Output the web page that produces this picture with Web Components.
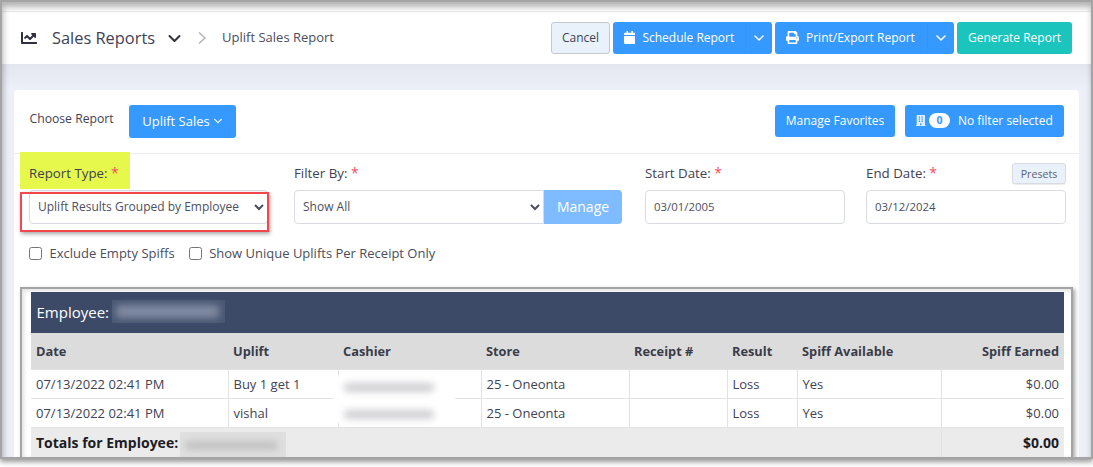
<!DOCTYPE html>
<html>
<head>
<meta charset="utf-8">
<title>Sales Reports</title>
<style>
	html, body {
		margin: 0;
		background: #fff;
		font-family: "Open Sans", sans-serif;
		color: #3f4254;
	}
	body {
		height: 467px;
		overflow: hidden;
	}
</style>
</head>
<body>
<sr-app>
	<sr-topbar></sr-topbar>
	<sr-card>
		<sr-choose-bar></sr-choose-bar>
		<sr-filters></sr-filters>
		<sr-results></sr-results>
	</sr-card>
</sr-app>

<script>
const ICONS = {
	chart: ['0 0 512 512', 'M496 384H64V80c0-8.84-7.16-16-16-16H16C7.16 64 0 71.16 0 80v336c0 17.67 14.33 32 32 32h464c8.84 0 16-7.16 16-16v-32c0-8.84-7.16-16-16-16zM464 96H345.94c-21.38 0-32.09 25.85-16.97 40.97l32.4 32.4L288 242.75l-73.37-73.37c-12.5-12.5-32.76-12.5-45.25 0l-68.69 68.69c-6.25 6.25-6.25 16.38 0 22.63l22.62 22.62c6.25 6.25 16.38 6.25 22.63 0L192 237.25l73.37 73.37c12.5 12.5 32.76 12.5 45.25 0l96-96 32.4 32.4c15.12 15.12 40.97 4.41 40.97-16.97V112c.01-8.84-7.15-16-15.99-16z'],
	calendar: ['0 0 448 512', 'M12 192h424c6.6 0 12 5.4 12 12v260c0 26.5-21.5 48-48 48H48c-26.5 0-48-21.5-48-48V204c0-6.6 5.4-12 12-12zm436-44v-36c0-26.5-21.5-48-48-48h-48V12c0-6.6-5.4-12-12-12h-40c-6.6 0-12 5.4-12 12v52H160V12c0-6.6-5.4-12-12-12h-40c-6.6 0-12 5.4-12 12v52H48C21.5 64 0 85.5 0 112v36c0 6.6 5.4 12 12 12h424c6.6 0 12-5.4 12-12z'],
	print: ['0 0 512 512', 'M448 192V77.25c0-8.49-3.37-16.62-9.37-22.63L393.37 9.37c-6-6-14.14-9.37-22.63-9.37H96C78.33 0 64 14.33 64 32v160c-35.35 0-64 28.65-64 64v112c0 8.84 7.16 16 16 16h48v96c0 17.67 14.33 32 32 32h320c17.67 0 32-14.33 32-32v-96h48c8.84 0 16-7.16 16-16V256c0-35.35-28.65-64-64-64zm-64 256H128v-96h256v96zm0-224H128V64h192v48c0 8.84 7.16 16 16 16h48v96zm48 72c-13.25 0-24-10.75-24-24 0-13.26 10.75-24 24-24s24 10.74 24 24c0 13.25-10.75 24-24 24z'],
	building: ['0 0 448 512', 'M436 480h-20V24c0-13.255-10.745-24-24-24H56C42.745 0 32 10.745 32 24v456H12c-6.627 0-12 5.373-12 12v20h448v-20c0-6.627-5.373-12-12-12zM128 76c0-6.627 5.373-12 12-12h40c6.627 0 12 5.373 12 12v40c0 6.627-5.373 12-12 12h-40c-6.627 0-12-5.373-12-12V76zm0 96c0-6.627 5.373-12 12-12h40c6.627 0 12 5.373 12 12v40c0 6.627-5.373 12-12 12h-40c-6.627 0-12-5.373-12-12v-40zm52 148h-40c-6.627 0-12-5.373-12-12v-40c0-6.627 5.373-12 12-12h40c6.627 0 12 5.373 12 12v40c0 6.627-5.373 12-12 12zm76 160h-64v-84c0-6.627 5.373-12 12-12h40c6.627 0 12 5.373 12 12v84zm64-172c0 6.627-5.373 12-12 12h-40c-6.627 0-12-5.373-12-12v-40c0-6.627 5.373-12 12-12h40c6.627 0 12 5.373 12 12v40zm0-96c0 6.627-5.373 12-12 12h-40c-6.627 0-12-5.373-12-12v-40c0-6.627 5.373-12 12-12h40c6.627 0 12 5.373 12 12v40zm0-96c0 6.627-5.373 12-12 12h-40c-6.627 0-12-5.373-12-12V76c0-6.627 5.373-12 12-12h40c6.627 0 12 5.373 12 12v40z']
};

function icon(name, size) {
	const [box, d] = ICONS[name];
	const width = size * box.split(' ')[2] / 512;
	return `<svg width="${width}" height="${size}" viewBox="${box}" fill="currentColor"><path d="${d}"/></svg>`;
}

function chevron(size, width, color) {
	return `<svg width="${size}" height="${size}" viewBox="0 0 12 12" fill="none" stroke="${color}" stroke-width="${width}" stroke-linecap="round" stroke-linejoin="round"><path d="M2 4l4 4 4-4"/></svg>`;
}

class SrElement extends HTMLElement {
	constructor() {
		super();
		this.attachShadow({mode: 'open'});
	}
	connectedCallback() {
		this.render();
	}
}

class SrApp extends SrElement {
	render() {
		this.shadowRoot.innerHTML = `
			<style>
				:host {
					display: block;
					box-sizing: border-box;
					width: 1093px;
					height: 459px;
					border: 2px solid #a4a4a4;
					background: #eef0f9;
					box-shadow: 0 3px 5px rgba(0, 0, 0, 0.4);
					overflow: hidden;
					position: relative;
				}
				.glow {
					position: absolute;
					inset: 0;
					box-shadow: inset 1px 5px 6px rgba(0, 0, 0, 0.3);
					pointer-events: none;
					z-index: 5;
				}
			</style>
			<div class="glow"></div>
			<slot></slot>
		`;
	}
}

class SrTopbar extends SrElement {
	render() {
		this.shadowRoot.innerHTML = `
			<style>
				:host {
					display: flex;
					box-sizing: border-box;
					height: 88px;
					background: linear-gradient(#fff 0, #fff 62px, #e3e5ef 62px, #eef0f9 88px);
					font-family: "Open Sans", sans-serif;
				}
				#bar {
					flex: 1;
					height: 62px;
					padding: 10px 19px 0 19px;
					box-sizing: border-box;
					display: flex;
					align-items: center;
				}
				.line {
					position: absolute;
					left: 0;
					right: 0;
					top: 9px;
					height: 1px;
					background: #ececf1;
				}
				#chart {
					color: #2f3140;
					display: flex;
					margin: -1px 15px 0 0;
				}
				#title {
					font-size: 16.4px;
					color: #3f4254;
					margin-top: -2px;
				}
				#title-arrow {
					display: flex;
					margin: 1px 0 0 12px;
				}
				#crumb-arrow {
					margin: -1px 15px 0 15px;
					display: flex;
				}
				#crumb {
					font-size: 13px;
					color: #4b4d5c;
					margin-top: -2px;
				}
				#actions {
					margin-left: auto;
					display: flex;
					gap: 3px;
				}
			</style>
			<div class="line"></div>
			<div id="bar">
				<span id="chart">${icon('chart', 16)}</span>
				<span id="title">Sales Reports</span>
				<span id="title-arrow">${chevron(15, 1.6, '#2f3140')}</span>
				<span id="crumb-arrow"><svg width="10" height="14" viewBox="0 0 10 14" fill="none" stroke="#b5b5c3" stroke-width="1.6"><path d="M2 1.5L8 7l-6 5.5"/></svg></span>
				<span id="crumb">Uplift Sales Report</span>
				<div id="actions">
					<sr-button kind="light" width="59">Cancel</sr-button>
					<sr-button split width="159" icon="calendar">Schedule Report</sr-button>
					<sr-button split width="179" icon="print">Print/Export Report</sr-button>
					<sr-button kind="teal" width="115">Generate Report</sr-button>
				</div>
			</div>
		`;
	}
}

class SrButton extends SrElement {
	render() {
		const width = this.getAttribute('width');
		const iconName = this.getAttribute('icon');
		const split = this.hasAttribute('split');
		this.shadowRoot.innerHTML = `
			<style>
				:host {
					display: inline-flex;
					box-sizing: border-box;
					height: 32px;
					width: ${width}px;
					border-radius: 3px;
					background: #3699ff;
					color: #fff;
					font-family: "Open Sans", sans-serif;
					font-size: 12px;
					align-items: center;
					justify-content: center;
					white-space: nowrap;
				}
				:host([kind="teal"]) { background: #1bc5bd; }
				:host([kind="light"]) {
					background: #e9f2fb;
					color: #3f4254;
					border: 1px solid #c6c9ce;
				}
				:host([split]) { justify-content: flex-start; }
				#main {
					flex: 1;
					display: flex;
					align-items: center;
					justify-content: ${split ? 'flex-start' : 'center'};
					gap: 7.5px;
					padding-left: ${split ? '10.5px' : '0'};
					height: 100%;
					box-sizing: border-box;
					padding-bottom: 1px;
				}
				#main svg { display: block; }
				#drop {
					width: 27px;
					height: 100%;
					display: flex;
					align-items: center;
					justify-content: center;
					border-left: 1px solid #3494fa;
					box-sizing: border-box;
				}
			</style>
			<div id="main">${iconName ? icon(iconName, 13) : ''}<span><slot></slot></span></div>
			${split ? `<div id="drop">${chevron(12, 1.5, '#fff')}</div>` : ''}
		`;
	}
}

class SrCard extends SrElement {
	render() {
		this.shadowRoot.innerHTML = `
			<style>
				:host {
					display: block;
					box-sizing: border-box;
					width: 1065px;
					height: 400px;
					margin-left: 12px;
					background: #fff;
					border-radius: 4px 4px 0 0;
				}
			</style>
			<slot></slot>
		`;
	}
}

class SrChooseBar extends SrElement {
	render() {
		this.shadowRoot.innerHTML = `
			<style>
				:host {
					display: flex;
					box-sizing: border-box;
					height: 64px;
					padding: 15px 15px 0 15.5px;
					border-bottom: 1px solid #ebedf3;
					font-family: "Open Sans", sans-serif;
				}
				#label {
					font-size: 12.2px;
					color: #3f4254;
					width: 99.5px;
					line-height: 27px;
				}
				#right {
					margin-left: auto;
					display: flex;
					gap: 10px;
				}
				#report { height: 33px; font-size: 13px; }
				.inner {
					display: flex;
					align-items: center;
				}
				.count {
					background: #fff;
					color: #3699ff;
					font-weight: 700;
					font-size: 10.5px;
					width: 21px;
					height: 15px;
					line-height: 15px;
					text-align: center;
					border-radius: 8px;
					margin: 0 8px 0 3px;
				}
				.small-chevron { display: flex; margin-left: 3px; }
				.building { display: flex; color: #fff; opacity: .85; }
			</style>
			<div id="label">Choose Report</div>
			<sr-button id="report" width="107"><span class="inner">Uplift Sales<span class="small-chevron">${chevron(10, 1.5, '#fff')}</span></span></sr-button>
			<div id="right">
				<sr-button width="120">Manage Favorites</sr-button>
				<sr-button width="159"><span class="inner"><span class="building">${icon('building', 11)}</span><span class="count">0</span>No filter selected</span></sr-button>
			</div>
		`;
	}
}

class SrField extends SrElement {
	render() {
		this.shadowRoot.innerHTML = `
			<style>
				:host {
					display: block;
					position: relative;
					width: ${this.getAttribute('width')}px;
					margin-left: ${this.getAttribute('gap') || 0}px;
					font-family: "Open Sans", sans-serif;
				}
				#top {
					height: 27px;
					display: flex;
					justify-content: space-between;
					align-items: flex-start;
					position: relative;
				}
				label {
					position: relative;
					font-size: 13.3px;
					font-weight: 500;
					line-height: 20px;
					color: #3f4254;
				}
				b {
					color: #f64e60;
					font-weight: 400;
					font-size: 14px;
				}
				.flag {
					position: absolute;
					left: -9px;
					top: -11px;
					width: 110px;
					height: 37px;
					background: #e5f84b;
				}
				.mark {
					position: absolute;
					left: -9px;
					top: 29px;
					width: 249px;
					height: 40px;
					box-sizing: border-box;
					border: 2.5px solid #f3474c;
					box-shadow: 1px 2px 4px rgba(0, 0, 0, 0.35);
					z-index: 2;
					pointer-events: none;
				}
			</style>
			${this.hasAttribute('marked') ? '<div class="flag"></div><div class="mark"></div>' : ''}
			<div id="top">
				<label>${this.getAttribute('label')} <b>*</b></label>
				<slot name="extra"></slot>
			</div>
			<slot></slot>
		`;
	}
}

class SrSelect extends SrElement {
	render() {
		const manage = this.hasAttribute('manage');
		this.shadowRoot.innerHTML = `
			<style>
				:host {
					display: flex;
					height: 34px;
					font-family: "Open Sans", sans-serif;
				}
				select {
					flex: 1;
					min-width: 0;
					box-sizing: border-box;
					height: 34px;
					font-family: inherit;
					font-size: 12px;
					color: #4d4f5e;
					background: #fff;
					border: 1px solid #d9dbe2;
					border-radius: ${manage ? '4px 0 0 4px' : '4px'};
					padding: 0 4px 2px;
					outline: none;
				}
				#manage {
					width: 78px;
					box-sizing: border-box;
					padding-bottom: 2px;
					background: #7fbcff;
					color: #fff;
					font-size: 14px;
					font-weight: 500;
					display: flex;
					align-items: center;
					justify-content: center;
					border-radius: 0 4px 4px 0;
				}
			</style>
			<select><option>${this.getAttribute('value')}</option></select>
			${manage ? '<div id="manage">Manage</div>' : ''}
		`;
	}
}

class SrFilters extends SrElement {
	render() {
		this.shadowRoot.innerHTML = `
			<style>
				:host {
					display: block;
					box-sizing: border-box;
					padding: 9px 0 0 15px;
					font-family: "Open Sans", sans-serif;
				}
				#row { display: flex; }
				input[type=text] {
					display: block;
					box-sizing: border-box;
					width: 100%;
					height: 34px;
					border: 1px solid #d9dbe2;
					border-radius: 4px;
					padding: 0 8px 2px;
					font-family: inherit;
					font-size: 11.4px;
					color: #4d4f5e;
					outline: none;
				}
				#presets {
					box-sizing: border-box;
					height: 21px;
					width: 54px;
					line-height: 20px;
					text-align: center;
					font-size: 10.6px;
					color: #5e6070;
					background: #e9f2fb;
					border: 1px solid #d9dbe2;
					border-radius: 3px;
					box-shadow: 0 1px 1px rgba(0, 0, 0, 0.08);
				}
				#checks {
					display: flex;
					align-items: center;
					margin-top: 20px;
					height: 18px;
					font-size: 13px;
					color: #4b4d5c;
				}
				#checks label {
					display: flex;
					align-items: center;
					margin-right: 14px;
				}
				#checks input {
					width: 13px;
					height: 13px;
					margin: 0 7.5px 0 0;
				}
			</style>
			<div id="row">
				<sr-field label="Report Type:" width="239" marked><sr-select value="Uplift Results Grouped by Employee"></sr-select></sr-field>
				<sr-field label="Filter By:" width="328" gap="26"><sr-select value="Show All" manage></sr-select></sr-field>
				<sr-field label="Start Date:" width="200" gap="23"><input type="text" value="03/01/2005"></sr-field>
				<sr-field label="End Date:" width="200" gap="21"><span slot="extra" id="presets">Presets</span><input type="text" value="03/12/2024"></sr-field>
			</div>
			<div id="checks">
				<label><input type="checkbox">Exclude Empty Spiffs</label>
				<label><input type="checkbox">Show Unique Uplifts Per Receipt Only</label>
			</div>
		`;
	}
}

class SrResults extends SrElement {
	constructor() {
		super();
		this.rows = [
			{date: '07/13/2022 02:41 PM', uplift: 'Buy 1 get 1', store: '25 - Oneonta', result: 'Loss', spiff: 'Yes', earned: '$0.00'},
			{date: '07/13/2022 02:41 PM', uplift: 'vishal', store: '25 - Oneonta', result: 'Loss', spiff: 'Yes', earned: '$0.00'}
		];
	}
	render() {
		const rowsHtml = this.rows.map(row => `
			<tr>
				<td>${row.date}</td>
				<td>${row.uplift}</td>
				<td></td>
				<td>${row.store}</td>
				<td></td>
				<td>${row.result}</td>
				<td>${row.spiff}</td>
				<td class="num">${row.earned}</td>
			</tr>
		`).join('');

		this.shadowRoot.innerHTML = `
			<style>
				:host {
					display: block;
					box-sizing: border-box;
					position: relative;
					width: 1053px;
					height: 170px;
					margin: 25px 0 0 6px;
					padding: 3px 7px 0 9px;
					background: #fff;
					border: 2px solid #a4a4a4;
					border-bottom: 0;
					box-shadow: 2px 2px 4px rgba(0, 0, 0, 0.35), inset 2px 2px 4px rgba(0, 0, 0, 0.12);
					overflow: hidden;
					font-family: "Open Sans", sans-serif;
				}
				#head {
					height: 41px;
					background: #3c4a68;
					color: #fff;
					font-size: 15px;
					line-height: 40px;
					padding-left: 5.5px;
				}
				table {
					border-collapse: collapse;
					table-layout: fixed;
					width: 1033px;
					font-size: 13px;
					color: #3f4254;
				}
				th {
					height: 36px;
					padding: 0 5px;
					box-sizing: border-box;
					background: #dcdcdc;
					text-align: left;
					font-weight: 700;
					font-size: 12.8px;
					color: #3a3c4a;
				}
				td {
					padding: 0 5px;
					box-sizing: border-box;
					height: 29px;
					border: 1px solid #e2e2e2;
					white-space: nowrap;
				}
				th:first-child, td:first-child { border-left: 0; }
				th:last-child, td:last-child { border-right: 0; }
				.num { text-align: right; }
				#totals td {
					background: #ebebeb;
					height: 30px;
					font-weight: 700;
					font-size: 14px;
					color: #1c1c24;
				}
				.blur {
					position: absolute;
				}
				.blur i {
					display: block;
					filter: blur(3.5px);
					border-radius: 4px;
					position: absolute;
				}
				#b-emp {
					left: 90px; top: 11px; width: 113px; height: 23px;
					background: #4b5874;
				}
				#b-emp i { left: 4px; right: 6px; top: 5px; height: 13px; background: #7f89a0; }
				#b-cash {
					left: 311px; top: 87px; width: 122px; height: 47px;
					background: rgba(255, 255, 255, 0.97);
					filter: blur(1px);
				}
				#b-cash i { left: 11px; width: 90px; height: 9px; background: #cfcfd3; }
				#b-total {
					left: 158px; top: 143px; width: 106px; height: 26px;
					background: #dfdfdf;
				}
				#b-total i { left: 5px; right: 8px; top: 9px; height: 9px; background: #c2c2c2; }
			</style>
			<div id="head">Employee:</div>
			<table>
				<colgroup>
					<col style="width:197px"><col style="width:110px"><col style="width:143px"><col style="width:148px">
					<col style="width:98px"><col style="width:70px"><col style="width:144px"><col style="width:123px">
				</colgroup>
				<thead>
					<tr>
						<th>Date</th><th>Uplift</th><th>Cashier</th><th>Store</th>
						<th>Receipt #</th><th>Result</th><th>Spiff Available</th><th class="num">Spiff Earned</th>
					</tr>
				</thead>
				<tbody>
					${rowsHtml}
					<tr id="totals"><td colspan="7">Totals for Employee:</td><td class="num">$0.00</td></tr>
				</tbody>
			</table>
			<div class="blur" id="b-emp"><i></i></div>
			<div class="blur" id="b-cash"><i style="top:7px"></i><i style="top:34px"></i></div>
			<div class="blur" id="b-total"><i></i></div>
		`;
	}
}

customElements.define('sr-app', SrApp);
customElements.define('sr-topbar', SrTopbar);
customElements.define('sr-button', SrButton);
customElements.define('sr-card', SrCard);
customElements.define('sr-choose-bar', SrChooseBar);
customElements.define('sr-field', SrField);
customElements.define('sr-select', SrSelect);
customElements.define('sr-filters', SrFilters);
customElements.define('sr-results', SrResults);
</script>
</body>
</html>
